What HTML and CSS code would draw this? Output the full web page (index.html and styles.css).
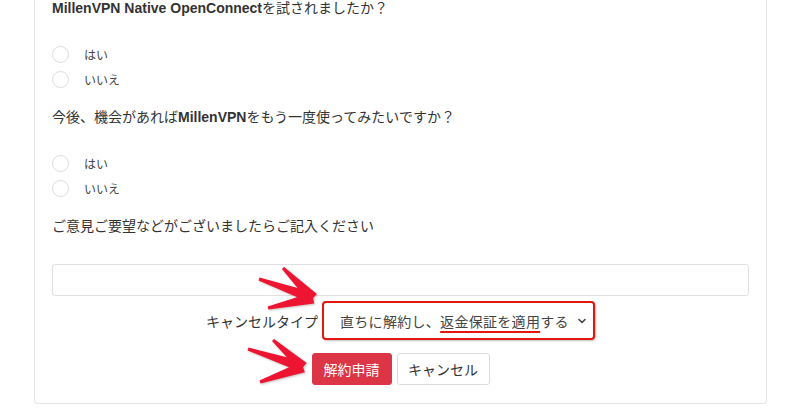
FILE: index.html
```html
<!DOCTYPE html>
<html lang="ja">
<head>
    <meta charset="UTF-8">
    <meta name="viewport" content="width=device-width, initial-scale=1.0">
    <title>解約申請</title>
    <link rel="stylesheet" href="styles.css">
</head>
<body>
    <div class="page">
        <div class="card">
            <div class="question q-first"><b class="en">MillenVPN Native OpenConnect</b>を試されましたか？</div>
            <div class="options">
                <label class="option"><span class="radio"></span>はい</label>
                <label class="option"><span class="radio"></span>いいえ</label>
            </div>

            <div class="question">今後、機会があれば<b class="en">MillenVPN</b>をもう一度使ってみたいですか？</div>
            <div class="options">
                <label class="option"><span class="radio"></span>はい</label>
                <label class="option"><span class="radio"></span>いいえ</label>
            </div>

            <div class="question">ご意見ご要望などがございましたらご記入ください</div>
            <div class="text-input"></div>

            <div class="cancel-row">
                <span class="cancel-label">キャンセルタイプ</span>
                <div class="mark-box">
                    <div class="select-box">
                        <span class="select-text">直ちに解約し、<span class="mark-line">返金保証を適用</span>する</span>
                        <svg class="chevron" width="10" height="10" viewBox="0 0 10 10">
                            <path d="M2 3.5 L5 6.5 L8 3.5" fill="none" stroke="#444" stroke-width="1.6" stroke-linecap="round" stroke-linejoin="round"/>
                        </svg>
                    </div>
                </div>
            </div>

            <div class="button-row">
                <button class="btn btn-danger">解約申請</button>
                <button class="btn btn-light">キャンセル</button>
            </div>
        </div>

        <!-- 注釈の矢印 -->
        <svg class="arrows" width="90" height="135" viewBox="0 0 90 135">
            <g fill="#ee1533">
                <polygon points="41.9,9.1 44.1,6.9 76.9,34.1 69.1,41.9"/>
                <polygon points="18.5,20.4 19.5,17.6 74.8,32.8 71.2,43.2"/>
                <polygon points="28.3,49.5 27.7,46.5 71.8,32.6 74.2,43.4"/>
                <polygon points="32,81.1 34,78.9 66.7,102.9 59.3,111.1"/>
                <polygon points="7.5,90.4 8.5,87.6 64.7,101.8 61.3,112.2"/>
                <polygon points="20.5,123.4 19.5,120.6 61.2,101.8 64.8,112.2"/>
            </g>
        </svg>
    </div>
</body>
</html>
```

FILE: styles.css
```css
body {
    margin: 0;
    background: #fff;
    font-family: 'Liberation Sans', 'Noto Sans CJK JP', sans-serif;
    color: #333;
}
.page {
    position: relative;
    width: 800px;
    height: 419px;
    overflow: hidden;
}
.card {
    margin-left: 34px;
    width: 733px;
    box-sizing: border-box;
    padding: 0 17px 18px;
    border: 1px solid #e4e4e4;
    border-top: none;
    border-radius: 0 0 4px 4px;
}
.question {
    font-size: 14px;
    line-height: 16px;
    height: 16px;
    color: #333;
    margin-top: 17px;
}
.q-first {
    margin-top: 0;
}
.en {
    font-weight: 700;
}
.options {
    margin-top: 26px;
}
.option {
    display: flex;
    align-items: center;
    height: 25px;
    font-size: 12px;
    color: #444;
}
.radio {
    width: 17px;
    height: 17px;
    box-sizing: border-box;
    border: 1px solid #dcdcdc;
    border-radius: 50%;
    margin-right: 15px;
}
.text-input {
    margin-top: 30px;
    height: 32px;
    box-sizing: border-box;
    border: 1px solid #e0e0e0;
    border-radius: 3px;
}
.cancel-row {
    display: flex;
    justify-content: center;
    align-items: center;
    gap: 4px;
    margin-top: 5px;
}
.cancel-label {
    font-size: 14px;
    color: #333;
}
.mark-box {
    width: 273px;
    height: 39px;
    box-sizing: border-box;
    border: 2px solid #e3170d;
    border-radius: 4px;
    box-shadow: 1px 1px 2px rgba(0,0,0,0.25);
    background: #fff;
}
.select-box {
    display: flex;
    align-items: center;
    justify-content: space-between;
    height: 100%;
    padding: 0 6px 0 16px;
}
.select-text {
    font-size: 14px;
    color: #444;
    white-space: nowrap;
    letter-spacing: 0.3px;
}
.mark-line {
    text-decoration: underline;
    text-decoration-color: #e3170d;
    text-decoration-thickness: 2px;
    text-underline-offset: 4px;
}
.chevron {
    display: block;
}
.button-row {
    display: flex;
    justify-content: center;
    gap: 5px;
    margin-top: 13px;
}
.btn {
    height: 32px;
    font-family: 'Liberation Sans', 'Noto Sans CJK JP', sans-serif;
    font-size: 14px;
    border-radius: 3px;
    cursor: pointer;
}
.btn-danger {
    width: 80px;
    background: #dc3545;
    border: 1px solid #dc3545;
    color: #fff;
}
.btn-light {
    width: 93px;
    background: #fff;
    border: 1px solid #dcdcdc;
    color: #333;
}
.arrows {
    position: absolute;
    left: 240px;
    top: 260px;
    filter: drop-shadow(1px 1px 1px rgba(0,0,0,0.25));
}
```
